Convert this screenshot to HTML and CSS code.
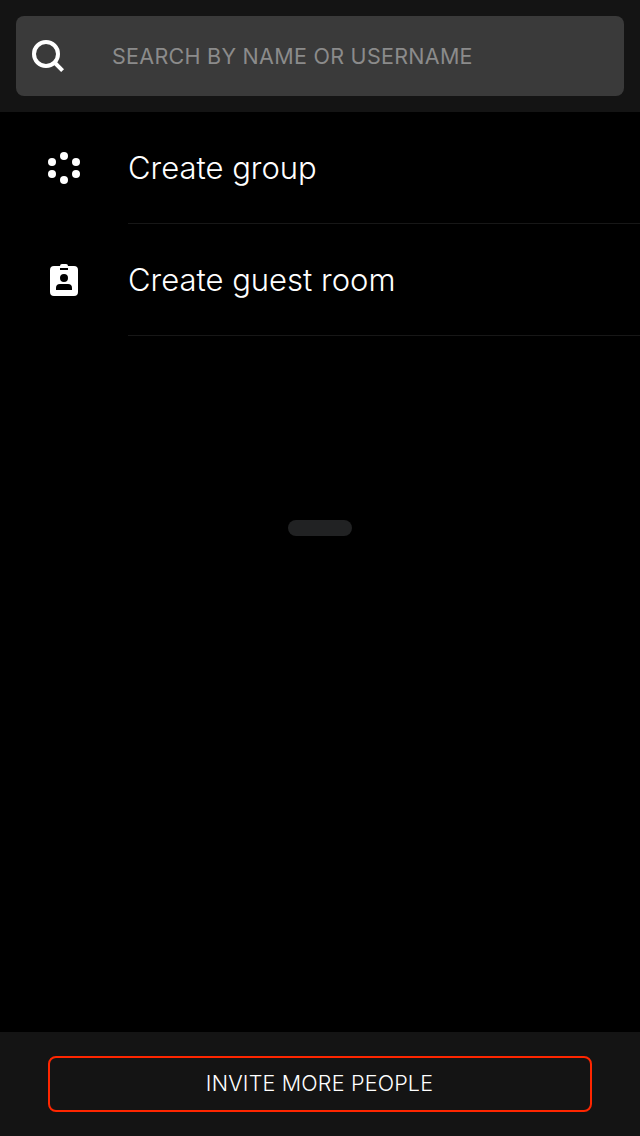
FILE: index.html
```html
<!DOCTYPE html>
<html lang="en">
<head>
<meta charset="utf-8">
<title>Contacts</title>
<link rel="stylesheet" href="styles.css">
</head>
<body>
<div class="screen">
  <header class="top">
    <div class="search">
      <svg class="search-icon" viewBox="0 0 32 32" width="32" height="32"><circle cx="14" cy="14" r="12" fill="none" stroke="#fff" stroke-width="4"/><path d="M22 22L30.6 30.6" stroke="#fff" stroke-width="4"/></svg>
      <span class="placeholder">SEARCH BY NAME OR USERNAME</span>
    </div>
  </header>
  <main class="content">
    <div class="row">
      <svg class="icon" viewBox="0 0 32 32" width="32" height="32" fill="#fff"><circle cx="16" cy="4" r="4"/><circle cx="16" cy="28" r="4"/><circle cx="4" cy="10" r="4"/><circle cx="28" cy="10" r="4"/><circle cx="4" cy="22" r="4"/><circle cx="28" cy="22" r="4"/></svg>
      <div class="label"><span>Create group</span></div>
    </div>
    <div class="row">
      <svg class="icon" viewBox="0 0 32 32" width="32" height="32"><path fill="#fff" fill-rule="evenodd" d="M6 2h6q0-2 2-2h4q2 0 2 2h6q4 0 4 4v22q0 4-4 4H6q-4 0-4-4V6q0-4 4-4zM12 4v2h8V4zM16 10a4 4 0 1 0 0 8a4 4 0 1 0 0-8zM8 26h16v-2q0-4-4-4h-8q-4 0-4 4z"/></svg>
      <div class="label"><span>Create guest room</span></div>
    </div>
    <div class="pill"></div>
  </main>
  <footer class="bottom">
    <div class="invite"><span>INVITE MORE PEOPLE</span></div>
  </footer>
</div>
</body>
</html>
```
FILE: styles.css
```css
body { margin: 0; background: #000; }
.screen { display: flex; flex-direction: column; width: 640px; height: 1136px; background: #000; color: #fff; font-family: Inter, "Liberation Sans", sans-serif; font-weight: 300; }
.top { height: 112px; padding: 16px; box-sizing: border-box; background: #141414; }
.search { display: flex; align-items: center; gap: 48px; height: 80px; box-sizing: border-box; padding-left: 16px; border-radius: 8px; background: #3a3a3a; }
.placeholder { font-size: 21.5px; font-weight: 400; line-height: 28px; letter-spacing: 0.28px; color: #8b8b8b; white-space: nowrap; }
.content { flex: 1; display: flex; flex-direction: column; }
.row { display: flex; align-items: center; gap: 48px; height: 112px; padding-left: 48px; }
.icon { flex: none; }
.label { flex: 1; display: flex; align-items: center; height: 112px; box-sizing: border-box; padding-top: 1px; border-bottom: 1px solid #171717; font-size: 31px; line-height: 38px; white-space: nowrap; }
.pill { align-self: center; width: 64px; height: 16px; margin-top: 184px; border-radius: 8px; background: #212223; }
.bottom { height: 104px; box-sizing: border-box; padding: 24px 48px; background: #141414; }
.invite { display: flex; align-items: center; justify-content: center; height: 56px; box-sizing: border-box; padding: 0 1px 2px 0; border: 2px solid #ff2600; border-radius: 8px; font-size: 21.5px; letter-spacing: 0.2px; white-space: nowrap; }
```
